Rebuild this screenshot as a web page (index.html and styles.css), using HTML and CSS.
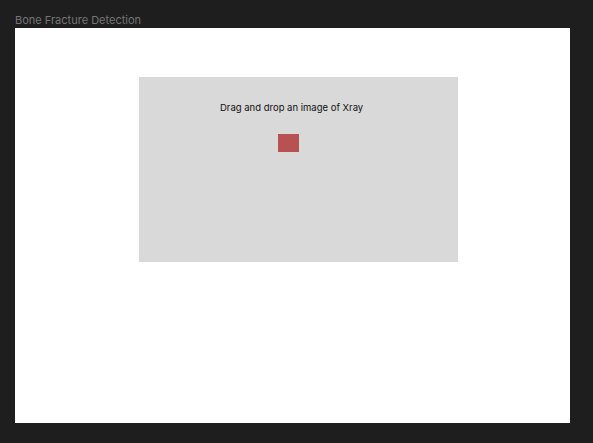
FILE: index.html
```html
<!DOCTYPE html>
<html>
<head>
<meta charset="utf-8">
<link rel="stylesheet" href="styles.css">
</head>
<body>
<div class="label">Bone Fracture Detection</div>
<div class="frame">
  <div class="dropzone">
    <div class="drop-text">Drag and drop an image of Xray</div>
    <div class="drop-icon"></div>
  </div>
</div>
</body>
</html>
```
FILE: styles.css
```css
html, body {
  margin: 0;
  padding: 0;
  background: #1e1e1e;
  height: 443px;
  overflow: hidden;
}
body {
  display: flex;
  flex-direction: column;
  padding-left: 15px;
  font-family: Inter, "Noto Sans", sans-serif;
}
.label {
  height: 28px;
  box-sizing: border-box;
  padding-top: 13px;
  font-size: 11px;
  line-height: 14px;
  color: #757575;
}
.frame {
  width: 555px;
  height: 395px;
  background: #ffffff;
  box-sizing: border-box;
  padding-top: 49px;
  padding-left: 124px;
}
.dropzone {
  width: 319px;
  height: 185px;
  background: #d9d9d9;
  box-sizing: border-box;
  padding-top: 24px;
  padding-left: 81px;
  display: flex;
  flex-direction: column;
}
.drop-text {
  font-size: 9.5px;
  line-height: 14px;
  color: #111111;
}
.drop-icon {
  width: 21px;
  height: 18px;
  background: #b85252;
  margin-top: 19px;
  margin-left: 58px;
}
```
